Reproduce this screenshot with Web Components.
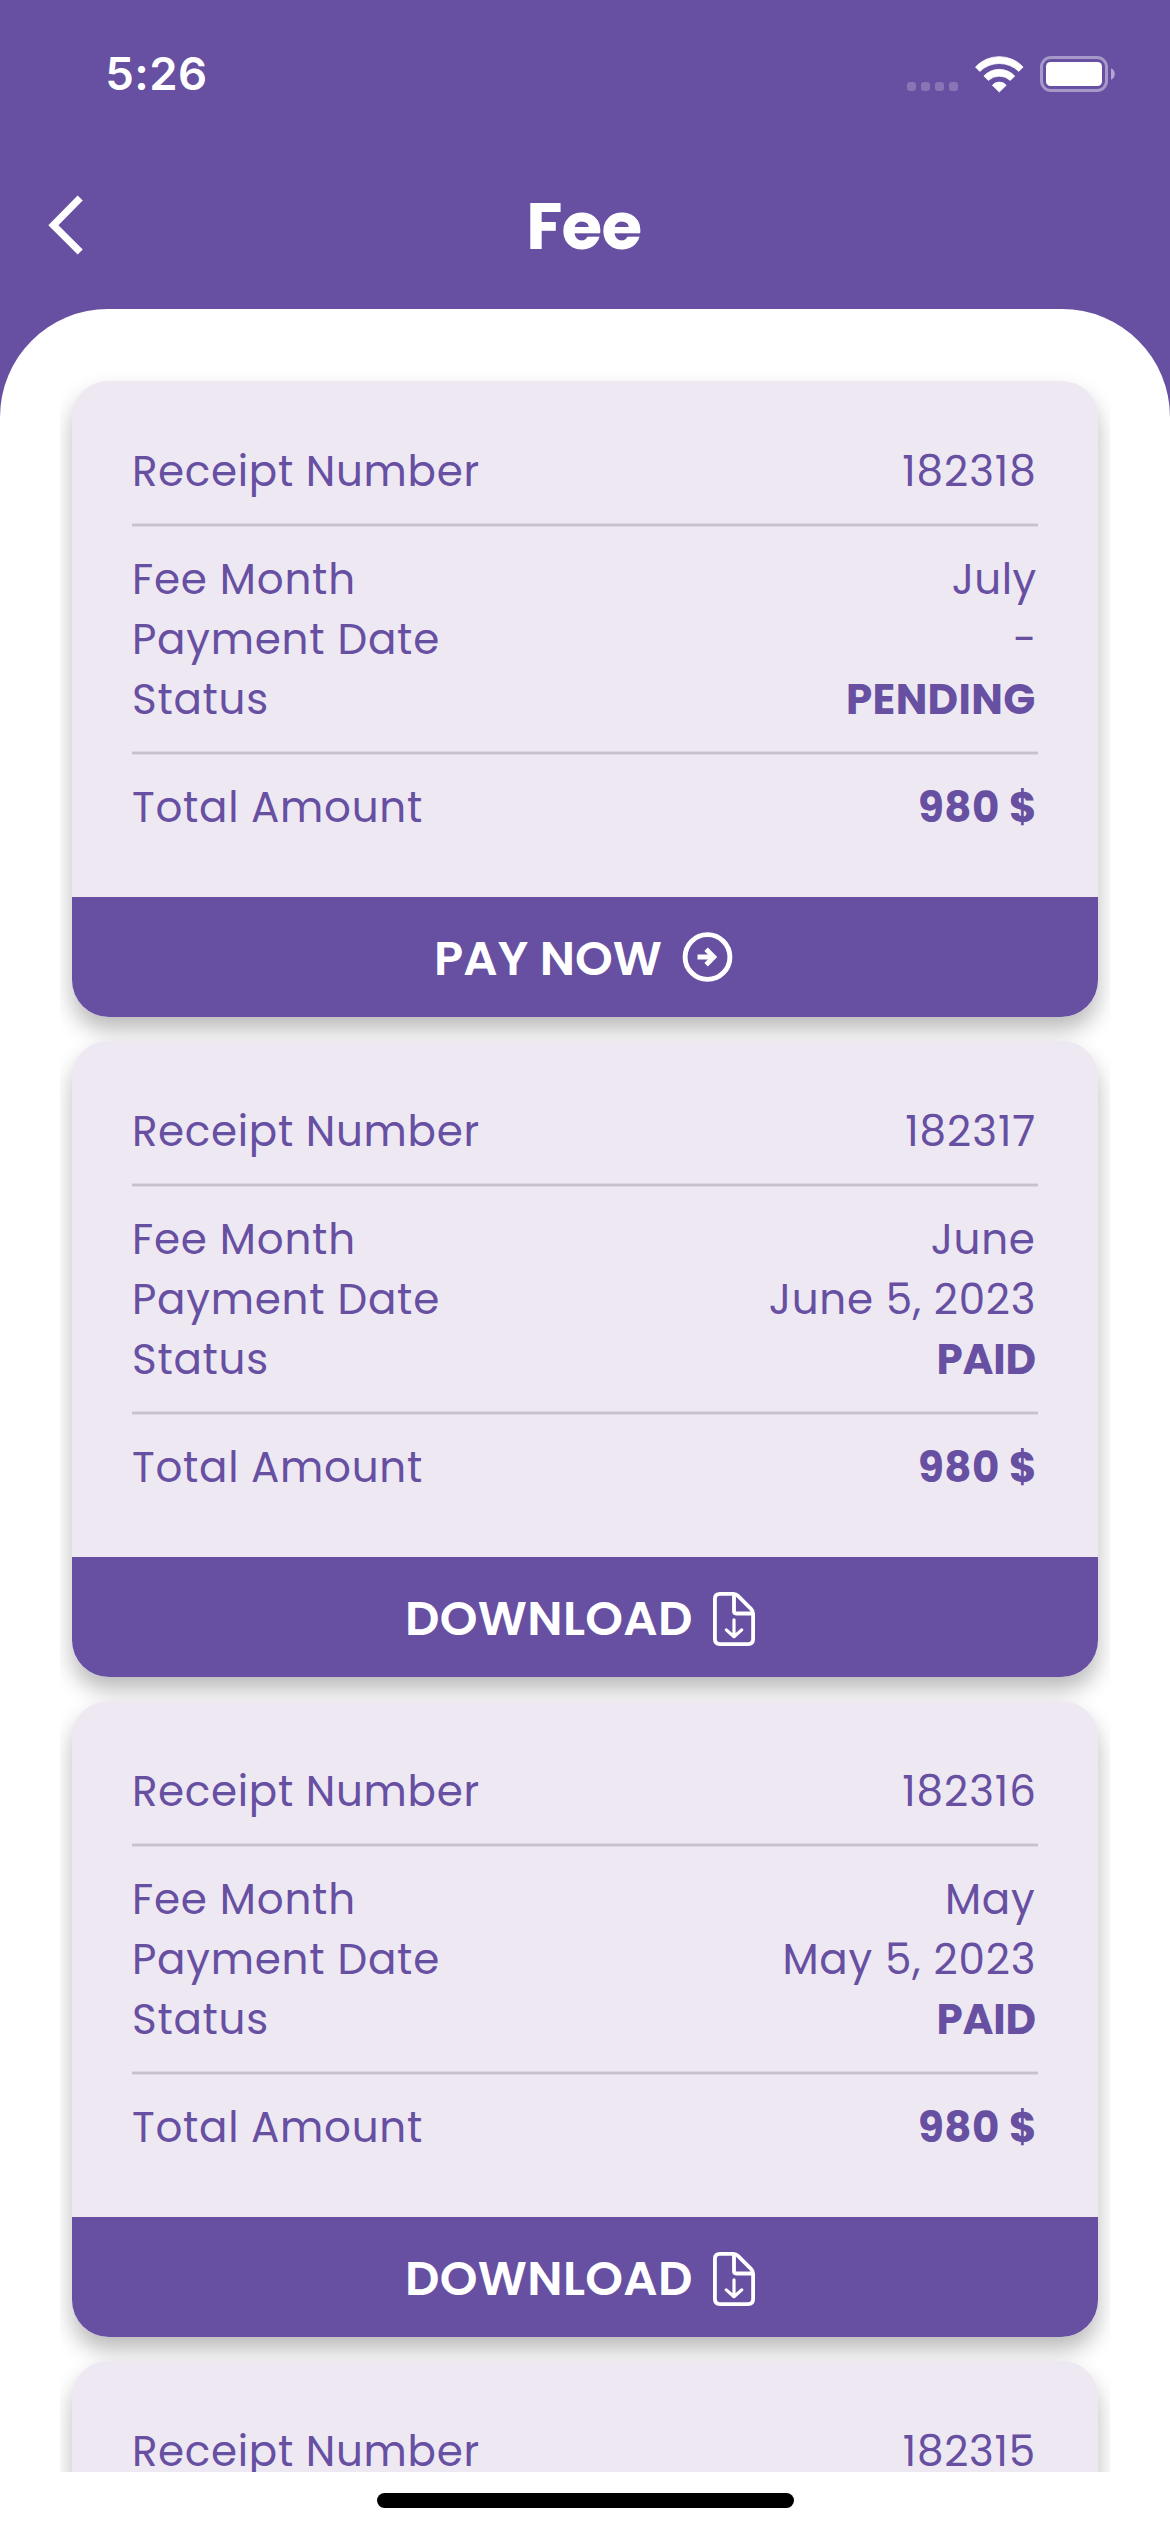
<!DOCTYPE html>
<html lang="en">
<head>
<meta charset="utf-8">
<title>Fee</title>
<style>
  html, body { margin: 0; padding: 0; }
  body {
    width: 1170px; height: 2532px; overflow: hidden; background: #674fa2;
    font-family: Poppins, Inter, "Open Sans", sans-serif;
  }
</style>
</head>
<body>
<fee-screen></fee-screen>
<script>
const define = (name, html, setup) => {
  const tpl = document.createElement('template');
  tpl.innerHTML = html;
  customElements.define(name, class extends HTMLElement {
    connectedCallback() {
      if (this.shadowRoot) return;
      this.attachShadow({ mode: 'open' }).append(tpl.content.cloneNode(true));
      if (setup) setup(this, this.shadowRoot);
    }
  });
};

/* Text whose letters are tracked so that the drawn line has the width `w`.
   `start` / `end`: space kept before or after the ink.
   Measured at ten times the size, as ink bounds are rounded to whole pixels. */
const ctx = document.createElement('canvas').getContext('2d');
define('fit-text', `<style>:host { display: block; } span { display: block; white-space: pre; }</style><span><slot></slot></span>`, (host, root) => {
  const span = root.querySelector('span');
  const text = host.textContent;
  const cs = getComputedStyle(host);
  ctx.font = `${cs.fontWeight} ${parseFloat(cs.fontSize) * 10}px ${cs.fontFamily}`;
  const m = ctx.measureText(text);
  const before = -m.actualBoundingBoxLeft / 10;
  const after = (m.width - m.actualBoundingBoxRight) / 10;
  const ink = m.width / 10 - before - after;
  const w = parseFloat(host.getAttribute('w'));
  const ls = text.length > 1 ? (w - ink) / (text.length - 1) : 0;
  host.style.letterSpacing = ls + 'px';
  span.style.marginLeft = (parseFloat(host.getAttribute('start') || 0) - before) + 'px';
  span.style.marginRight = (parseFloat(host.getAttribute('end') || 0) - after - ls) + 'px';
});

define('status-bar', `
  <style>
    :host { display: flex; align-items: center; justify-content: space-between; height: 148px;
      box-sizing: border-box; padding: 0 55px 0 108px; color: #fff; }
    fit-text { font: 600 45.5px/60px Inter, sans-serif; }
    .icons { display: flex; align-items: center; }
    .dots { display: flex; gap: 5px; margin: 25px 17px 0 0; }
    .dots i { width: 9px; height: 9px; border-radius: 3px; background: rgba(255,255,255,.22); }
    svg { display: block; }
    .wifi { margin-right: 16px; }
  </style>
  <fit-text w="97">5:26</fit-text>
  <div class="icons">
    <div class="dots"><i></i><i></i><i></i><i></i></div>
    <svg class="wifi" width="49" height="37" viewBox="0 0 49 37" fill="#fff" stroke="#fff" stroke-width=".8" stroke-linejoin="round">
      <path d="M.5 11A32.5 32.5 0 0 1 48.1 11L43.8 15.4A28 28 0 0 0 4.8 15.4Z"/>
      <path d="M8.9 20A21.2 21.2 0 0 1 39.7 20L35.3 24.4A16.3 16.3 0 0 0 13.3 24.4Z"/>
      <path d="M17.4 29.3A9 9 0 0 1 31.2 29.3L24.3 36Z"/>
    </svg>
    <svg width="75" height="36" viewBox="0 0 75 36">
      <rect x="1.5" y="1.5" width="65" height="33" rx="9.5" fill="none" stroke="#fff" stroke-opacity=".42" stroke-width="3"/>
      <rect x="6" y="6" width="56" height="24" rx="4.5" fill="#fff"/>
      <path d="M71 12.3A6.2 6.2 0 0 1 71 23.7Z" fill="#fff" fill-opacity=".5"/>
    </svg>
  </div>`);

define('nav-bar', `
  <style>
    :host { display: grid; grid-template-columns: 1fr auto 1fr; align-items: center; height: 161px;
      box-sizing: border-box; padding: 0 46px 6px; color: #fff; }
    svg { display: block; }
    fit-text { font-weight: 700; font-size: 66px; line-height: 84px; }
  </style>
  <svg width="40" height="61" viewBox="46 195 40 61"><path d="M80.2 198L53.4 225.2L80.2 252" fill="none" stroke="#fff" stroke-width="7.2"/></svg>
  <fit-text w="111.5">Fee</fit-text>
  <span></span>`);

define('fee-row', `
  <style>
    :host { display: flex; justify-content: space-between; height: 60px; line-height: 62px;
      font-size: 42px; font-weight: 400; color: #674fa2; }
    .strong { font-weight: 700; }
  </style>`, (host, root) => {
  const [label, lw, start, value, vw, end] = host.data;
  const make = (text, w, side, gap, strong) => {
    const el = document.createElement('fit-text');
    el.textContent = text;
    el.setAttribute('w', w);
    el.setAttribute(side, gap);
    if (strong) el.className = 'strong';
    root.append(el);
  };
  make(label, lw, 'start', start);
  make(value, vw, 'end', end, label === 'Status' || label === 'Total Amount');
});

define('fee-rule', `
  <style>
    :host { display: block; height: 2px; margin: 22px 0; background: #c8c1cd;
      border: solid #ded7e4; border-width: 1px 0; }
  </style>`);

const ICONS = {
  pay: `<svg width="64.5" height="50" viewBox="668.5 932 64.5 50" fill="none" stroke="#fff">
    <circle cx="707" cy="957" r="22.4" stroke-width="4.9"/>
    <path d="M697 957H713" stroke-width="5"/>
    <path d="M705.6 949.2L713.3 957L705.6 964.8" stroke-width="4.9"/></svg>`,
  download: `<svg width="64" height="54" viewBox="698 1591.7 64 54" fill="none" stroke="#fff" stroke-width="3.8" stroke-linejoin="round">
    <path d="M720 1593.6H733.6Q736 1593.6 738 1595.6L751 1608.6Q753.1 1610.7 753.1 1613.5V1638.8Q753.1 1643.8 748.1 1643.8H720Q714.9 1643.8 714.9 1638.8V1598.6Q714.9 1593.6 720 1593.6Z"/>
    <path d="M734 1594V1611Q734 1613.2 736.2 1613.2H753"/>
    <path d="M734 1619.5V1636M726.3 1629.6L734 1636.4L741.7 1629.6" stroke-width="3.2" stroke-linecap="round"/></svg>`
};

define('fee-action', `
  <style>
    :host { display: flex; align-items: center; justify-content: center; gap: 7px; height: 120px;
      background: #674fa2; color: #fff; border-radius: 0 0 37px 37px;
      font-weight: 600; font-size: 48px; line-height: 60px; }
    fit-text { padding-top: 4px; }
    svg { display: block; }
    :host([kind="download"]) svg { margin-top: 3px; }
  </style>`, (host, root) => {
  const pay = host.getAttribute('kind') === 'pay';
  const text = document.createElement('fit-text');
  text.textContent = pay ? 'PAY NOW' : 'DOWNLOAD';
  text.setAttribute('w', pay ? 224.5 : 283);
  root.append(text);
  const box = document.createElement('template');
  box.innerHTML = ICONS[pay ? 'pay' : 'download'];
  root.append(box.content);
});

define('fee-card', `
  <style>
    :host { display: block; flex: none; height: 636px; border-radius: 36px; background: #eee8f3;
      box-shadow: 0 13px 22px rgba(0,0,0,.27); }
    .body { height: 516px; box-sizing: border-box; padding: 60px 60px 0; display: flex; flex-direction: column; }
  </style>
  <div class="body"></div>`, (host, root) => {
  const d = host.data;
  const body = root.querySelector('.body');
  const row = (...data) => {
    const el = document.createElement('fee-row');
    el.data = data;
    body.append(el);
  };
  const rule = () => body.append(document.createElement('fee-rule'));
  row('Receipt Number', 344, 2.5, ...d.number);
  if (d.kind) {
    rule();
    row('Fee Month', 218, 2.5, ...d.month);
    row('Payment Date', 303, 2.5, ...d.date);
    row('Status', 132.5, 2, ...d.status);
    rule();
    row('Total Amount', 288, 1.3, '980 $', 114, 4);
    const action = document.createElement('fee-action');
    action.setAttribute('kind', d.kind);
    root.append(action);
  }
});

const PAID = ['PAID', 96.5, 3];
const FEES = [
  { number: ['182318', 130, 4.5], month: ['July', 83, 2], date: ['-', 17, 5], status: ['PENDING', 186, 4], kind: 'pay' },
  { number: ['182317', 127.5, 4], month: ['June', 101, 5], date: ['June 5, 2023', 263, 5], status: PAID, kind: 'download' },
  { number: ['182316', 130, 4.5], month: ['May', 87, 3.5], date: ['May 5, 2023', 248, 5], status: PAID, kind: 'download' },
  { number: ['182315', 129, 5] }
];

define('fee-list', `
  <style>
    :host { display: flex; flex-direction: column; gap: 24px; height: 2163px; box-sizing: border-box;
      margin: 0 60px; padding: 72px 12px 0; overflow: hidden; }
  </style>`, (host, root) => {
  for (const fee of FEES) {
    const card = document.createElement('fee-card');
    card.data = fee;
    root.append(card);
  }
});

define('home-indicator', `
  <style>
    :host { display: flex; justify-content: center; padding-top: 21px; }
    i { width: 417px; height: 15px; border-radius: 8px; background: #000; margin-left: 1px; }
  </style><i></i>`);

define('fee-screen', `
  <style>
    :host { display: flex; flex-direction: column; width: 1170px; height: 2532px; background: #674fa2; }
    main { flex: 1; min-height: 0; background: #fff; border-radius: 108px 108px 0 0; }
  </style>
  <status-bar></status-bar>
  <nav-bar></nav-bar>
  <main>
    <fee-list></fee-list>
    <home-indicator></home-indicator>
  </main>`);
</script>
</body>
</html>
